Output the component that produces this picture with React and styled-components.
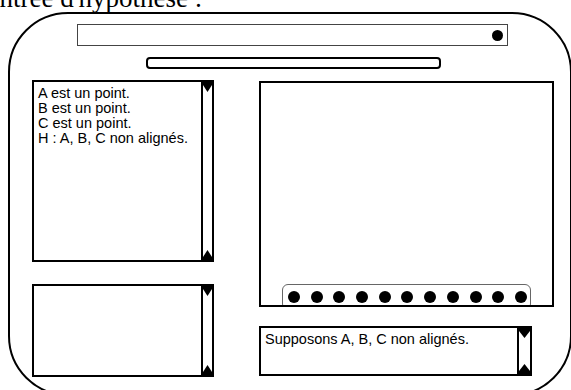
import React from 'react';
import styled, { createGlobalStyle } from 'styled-components';

const Global = createGlobalStyle`
  html, body { margin: 0; padding: 0; overflow: hidden; background: #fff; }
  body { font-family: "Liberation Sans", Arial, sans-serif; color: #000; }
`;

const Page = styled.div`
  width: 571px;
  height: 390px;
  overflow: hidden;
`;

const Title = styled.h1`
  margin: -15px 0 0 -17px;
  height: 27px;
  font-family: "Liberation Serif", "Times New Roman", serif;
  font-weight: normal;
  font-size: 27px;
  line-height: 27px;
  white-space: nowrap;
`;

const Frame = styled.div`
  margin: 0 0 0 8px;
  width: 564px;
  height: 384px;
  box-sizing: border-box;
  border: 2px solid #000;
  border-radius: 60px;
  display: flex;
  flex-direction: column;
`;

const SearchBar = styled.div`
  margin: 10px 0 0 67px;
  width: 431px;
  height: 22px;
  box-sizing: border-box;
  border: 1px solid #444;
  display: flex;
  align-items: center;
  justify-content: flex-end;
  padding-right: 4px;
`;

const Knob = styled.span`
  width: 11px;
  height: 11px;
  border-radius: 50%;
  background: #000;
`;

const Progress = styled.div`
  margin: 11px 0 0 136px;
  width: 295px;
  height: 12px;
  box-sizing: border-box;
  border: 2px solid #000;
  border-radius: 4px;
`;

const Main = styled.div`
  margin: 11px 0 0 22px;
  display: grid;
  grid-template-columns: 182px 295px;
  column-gap: 45px;
  align-items: start;
`;

const Column = styled.div`
  display: flex;
  flex-direction: column;
  gap: ${(p) => p.$gap}px;
  padding-top: ${(p) => p.$top || 0}px;
`;

const Panel = styled.div`
  display: flex;
  width: ${(p) => p.$w}px;
  height: ${(p) => p.$h}px;
  box-sizing: border-box;
  border: 2px solid #000;
  background: #fff;
`;

const TextArea = styled.div`
  flex: 1;
  padding: 4px;
  font-size: 14.5px;
  line-height: 15px;
  white-space: pre-line;
`;

const ScrollBar = styled.div`
  width: ${(p) => p.$w}px;
  border-left: 2px solid #000;
  display: flex;
  flex-direction: column;
  justify-content: space-between;
  align-items: stretch;
`;

const Arrow = styled.svg`
  display: block;
  width: 100%;
  height: 10px;
`;

const Canvas = styled.div`
  width: 295px;
  height: 226px;
  box-sizing: border-box;
  border: 2px solid #000;
  display: flex;
  flex-direction: column;
  justify-content: flex-end;
  align-items: center;
  overflow: hidden;
`;

const DotBar = styled.div`
  width: 249px;
  height: 26px;
  box-sizing: border-box;
  border: 1px solid #666;
  border-radius: 6px;
  margin-bottom: -5px;
  display: flex;
  align-items: flex-start;
  justify-content: space-between;
  padding: 6px 3px 0 5px;
`;

const Dot = styled.span`
  width: 12px;
  height: 12px;
  border-radius: 50%;
  background: #000;
`;

function Scroll({ w }) {
  return (
    <ScrollBar $w={w}>
      <Arrow viewBox="0 0 10 10" preserveAspectRatio="none">
        <polygon points="0,0 10,0 10,3 5,10 0,3" fill="#000" />
      </Arrow>
      <Arrow viewBox="0 0 10 10" preserveAspectRatio="none">
        <polygon points="0,10 10,10 10,7 5,0 0,7" fill="#000" />
      </Arrow>
    </ScrollBar>
  );
}

export default function App() {
  return (
    <Page>
      <Global />
      <Title>Entrée d'hypothèse :</Title>
      <Frame>
        <SearchBar>
          <Knob />
        </SearchBar>
        <Progress />
        <Main>
          <Column $gap={22}>
            <Panel $w={182} $h={182}>
              <TextArea>
                {'A est un point.\nB est un point.\nC est un point.\nH : A, B, C non alignés.'}
              </TextArea>
              <Scroll w={9} />
            </Panel>
            <Panel $w={182} $h={93}>
              <TextArea />
              <Scroll w={9} />
            </Panel>
          </Column>
          <Column $gap={19} $top={1}>
            <Canvas>
              <DotBar>
                {Array.from({ length: 11 }).map((_, i) => (
                  <Dot key={i} />
                ))}
              </DotBar>
            </Canvas>
            <Panel $w={273} $h={50}>
              <TextArea>Supposons A, B, C non alignés.</TextArea>
              <Scroll w={11} />
            </Panel>
          </Column>
        </Main>
      </Frame>
    </Page>
  );
}
